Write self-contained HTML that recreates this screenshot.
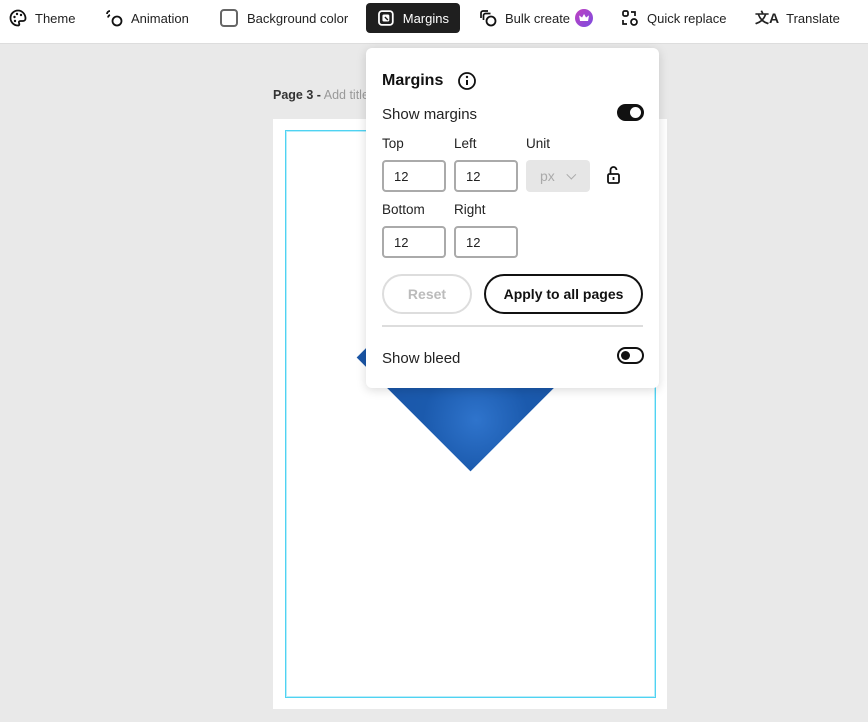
<!DOCTYPE html>
<html><head><style>
*{box-sizing:border-box;margin:0;padding:0}
body{width:868px;height:722px;background:#e9e9e9;font-family:"Liberation Sans",sans-serif;position:relative;overflow:hidden;color:#222}
.tb{position:absolute;left:0;top:0;width:868px;height:44px;background:#fff;border-bottom:1px solid #ddd}
.it{position:absolute;top:3px;height:30px;display:flex;align-items:center;font-size:13px;color:#222}
.it svg{margin-right:8px}
.sel{background:#1f1f1f;color:#fff;border-radius:4px;padding:0 11px}
.abs{position:absolute}
.pop{position:absolute;left:366px;top:48px;width:293px;height:340px;background:#fff;border-radius:6px;box-shadow:0 2px 10px rgba(0,0,0,.15)}
.lbl{position:absolute;font-size:13.5px;color:#222}
.inp{position:absolute;width:64px;height:32px;border:2px solid #aaa;border-radius:4px;font-size:13px;padding:7px 0 0 10px}
.tog{position:absolute;width:27px;height:17px;border-radius:9px;border:2px solid #111}
</style></head><body>
<div class="tb">
 <div class="it" style="left:9px"><svg width="18" height="18" viewBox="0 0 18 18"><path d="M9 1.5a7.5 7.5 0 1 0 0 15c1.5 0 1.5-1.5 1-2.5s0-2 1.5-2H14a2.5 2.5 0 0 0 2.5-2.5C16.5 5 13 1.5 9 1.5z" fill="none" stroke="#111" stroke-width="1.8"/><circle cx="5.5" cy="8" r="1.2" fill="#111"/><circle cx="8" cy="5" r="1.2" fill="#111"/><circle cx="12" cy="6" r="1.2" fill="#111"/><circle cx="6" cy="12" r="1.2" fill="#111"/></svg>Theme</div>
 <div class="it" style="left:105px"><svg width="18" height="18" viewBox="0 0 18 18"><circle cx="12" cy="12" r="4.5" fill="none" stroke="#111" stroke-width="1.8"/><path d="M2 5a3 3 0 0 1 3-3M3 8.5a3 3 0 0 1 2-2.5" fill="none" stroke="#111" stroke-width="1.8"/></svg>Animation</div>
 <div class="it" style="left:220px"><span style="width:18px;height:18px;border:2px solid #666;border-radius:4px;margin-right:9px;display:inline-block"></span>Background color</div>
 <div class="it sel" style="left:366px;width:94px"><svg width="18" height="18" viewBox="0 0 18 18"><rect x="2" y="2" width="14" height="14" rx="3" fill="none" stroke="#fff" stroke-width="1.8"/><rect x="5.5" y="5.5" width="7" height="7" rx="1.5" fill="#fff"/><path d="M8 8l3 3" stroke="#1f1f1f" stroke-width="1.4"/></svg>Margins</div>
 <div class="it" style="left:479px"><svg width="18" height="18" viewBox="0 0 18 18"><path d="M2 9V4a2 2 0 0 1 2-2h5M4.5 11V6.5a2 2 0 0 1 2-2h5" fill="none" stroke="#111" stroke-width="1.7"/><circle cx="12" cy="12" r="4.5" fill="none" stroke="#111" stroke-width="1.8"/></svg>Bulk create<span style="display:inline-block;width:18px;height:18px;border-radius:50%;background:linear-gradient(135deg,#c040c0,#7b4de0);margin-left:5px;position:relative"><span style="position:absolute;left:4px;top:5px;width:10px;height:7px;background:#fff;clip-path:polygon(0 20%,30% 50%,50% 0,70% 50%,100% 20%,90% 100%,10% 100%)"></span></span></div>
 <div class="it" style="left:621px"><svg width="18" height="18" viewBox="0 0 18 18"><rect x="2" y="2" width="5" height="5" rx="1.5" fill="none" stroke="#111" stroke-width="1.7"/><circle cx="13" cy="13" r="3" fill="none" stroke="#111" stroke-width="1.7"/><path d="M10 3h4v4M2 11v4h4" fill="none" stroke="#111" stroke-width="1.7"/></svg>Quick replace</div>
 <div class="it" style="left:755px"><span style="font-weight:bold;font-size:14px;margin-right:7px">文A</span>Translate</div>
</div>
<div class="abs" style="left:273px;top:88px;font-size:12.5px"><b style="color:#333">Page 3 -</b> <span style="color:#999">Add title</span></div>
<div class="abs" style="left:273px;top:119px;width:394px;height:590px;background:#fff"></div>
<div class="abs" style="left:285px;top:130px;width:371px;height:568px;border:1px solid #4fd3f2;box-shadow:inset 0 0 0 1px rgba(79,211,242,.4)"></div>
<div class="abs" style="left:390px;top:277px;width:161px;height:161px;transform:rotate(45deg);background:radial-gradient(circle at 80% 75%,#2f74cc 0,#1b5aad 30%,#1a55a6 70%)"></div>
<div class="pop">
 <div class="lbl" style="left:16px;top:24px;font-size:16px;font-weight:bold;color:#111">Margins</div>
 <svg class="abs" style="left:91px;top:23px" width="20" height="20" viewBox="0 0 20 20"><circle cx="10" cy="10" r="8" fill="none" stroke="#111" stroke-width="1.8"/><circle cx="10" cy="6" r="1.2" fill="#111"/><path d="M10 9v5" stroke="#111" stroke-width="2"/></svg>
 <div class="lbl" style="left:16px;top:58px;font-size:15px">Show margins</div>
 <div class="tog" style="left:251px;top:56px;background:#111"><span style="position:absolute;right:1px;top:1px;width:11px;height:11px;border-radius:50%;background:#fff"></span></div>
 <div class="lbl" style="left:16px;top:88px">Top</div>
 <div class="lbl" style="left:88px;top:88px">Left</div>
 <div class="lbl" style="left:160px;top:88px">Unit</div>
 <div class="inp" style="left:16px;top:112px">12</div>
 <div class="inp" style="left:88px;top:112px">12</div>
 <div class="abs" style="left:160px;top:112px;width:64px;height:32px;background:#e6e6e6;border-radius:4px;color:#aaa;font-size:14px;padding:8px 0 0 14px">px <span style="margin-left:6px;display:inline-block;width:7px;height:7px;border-right:1.5px solid #aaa;border-bottom:1.5px solid #aaa;transform:rotate(45deg) translateY(-4px)"></span></div>
 <svg class="abs" style="left:240px;top:117px" width="16" height="20" viewBox="0 0 16 20"><rect x="2" y="9" width="11" height="9" rx="1.5" fill="none" stroke="#111" stroke-width="1.8"/><path d="M4.5 9V5a3 3 0 0 1 6 0" fill="none" stroke="#111" stroke-width="1.8"/><path d="M7.5 12v3" stroke="#111" stroke-width="1.8"/></svg>
 <div class="lbl" style="left:16px;top:154px">Bottom</div>
 <div class="lbl" style="left:88px;top:154px">Right</div>
 <div class="inp" style="left:16px;top:178px">12</div>
 <div class="inp" style="left:88px;top:178px">12</div>
 <div class="abs" style="left:16px;top:226px;width:90px;height:40px;border:2px solid #ddd;border-radius:20px;color:#bbb;font-weight:bold;font-size:14px;text-align:center;line-height:36px">Reset</div>
 <div class="abs" style="left:118px;top:226px;width:159px;height:40px;border:2px solid #111;border-radius:20px;color:#111;font-weight:bold;font-size:14px;text-align:center;line-height:36px">Apply to all pages</div>
 <div class="abs" style="left:16px;top:277px;width:261px;height:2px;background:#ddd"></div>
 <div class="lbl" style="left:16px;top:302px;font-size:15px">Show bleed</div>
 <div class="tog" style="left:251px;top:299px"><span style="position:absolute;left:2px;top:2px;width:9px;height:9px;border-radius:50%;background:#111"></span></div>
</div>
</body></html>
